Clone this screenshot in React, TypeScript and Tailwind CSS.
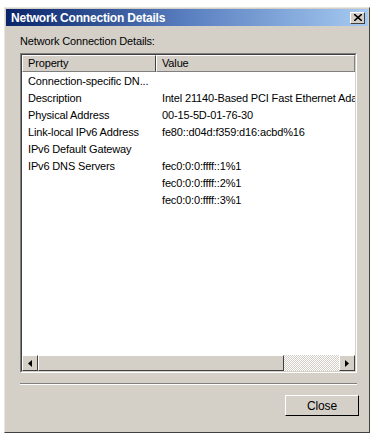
const rows: [string, string][] = [
  ["Connection-specific DN...", ""],
  ["Description", "Intel 21140-Based PCI Fast Ethernet Adapter (Emulated)"],
  ["Physical Address", "00-15-5D-01-76-30"],
  ["Link-local IPv6 Address", "fe80::d04d:f359:d16:acbd%16"],
  ["IPv6 Default Gateway", ""],
  ["IPv6 DNS Servers", "fec0:0:0:ffff::1%1"],
  ["", "fec0:0:0:ffff::2%1"],
  ["", "fec0:0:0:ffff::3%1"],
];

export default function App() {
  return (
    <div
      className="w-[378px] h-[441px] bg-white pt-[7px] pl-[4px] text-[11px] tracking-[-0.15px] text-black"
      style={{ fontFamily: '"Liberation Sans", Arial, sans-serif' }}
    >
      {/* window frame */}
      <div className="w-[366px] h-[426px] bg-[#d4d0c8] border border-t-[#e8e6e1] border-l-[#e8e6e1] border-r-[#404040] border-b-[#404040] flex flex-col">
        {/* title bar */}
        <div className="h-[17px] mx-[1px] mt-[1px] flex items-center justify-between pl-[5px] pr-[3px] bg-gradient-to-r from-[#0a246a] via-[#5a7fc0] to-[#a6caf0]">
          <span className="text-white font-bold text-[12px] tracking-[-0.2px]">Network Connection Details</span>
          <button className="w-[15px] h-[12px] bg-[#d4d0c8] border border-t-white border-l-white border-r-[#404040] border-b-[#404040] flex items-center justify-center">
            <svg width="8" height="7" viewBox="0 0 8 7">
              <path d="M0 0 L8 7 M8 0 L0 7" stroke="#000" strokeWidth="1.6" />
            </svg>
          </button>
        </div>

        <div className="flex flex-col pl-[15px] pr-[10px] flex-1">
          <div className="mt-[9px] h-[13px] leading-[13px]">Network Connection Details:</div>

          {/* list view */}
          <div className="mt-[5px] w-[337px] h-[320px] flex flex-col border border-t-[#808080] border-l-[#808080] border-r-white border-b-white">
            <div className="flex-1 flex flex-col bg-white border border-t-[#404040] border-l-[#404040] border-r-[#d4d0c8] border-b-[#d4d0c8] overflow-hidden">
              {/* header */}
              <div className="flex h-[17px] shrink-0">
                <div className="w-[134px] bg-[#d4d0c8] border border-t-white border-l-white border-r-[#404040] border-b-[#808080] pl-[5px] leading-[14px]">
                  Property
                </div>
                <div className="flex-1 bg-[#d4d0c8] border border-t-white border-l-white border-r-[#808080] border-b-[#808080] pl-[5px] leading-[14px]">
                  Value
                </div>
              </div>
              {/* rows */}
              <div className="flex-1 flex flex-col pt-[1px]">
                {rows.map(([p, v], i) => (
                  <div key={i} className="flex h-[17px] leading-[17px] whitespace-nowrap">
                    <div className="w-[134px] pl-[6px] overflow-hidden">{p}</div>
                    <div className="flex-1 pl-[6px] overflow-hidden">{v}</div>
                  </div>
                ))}
              </div>
              {/* horizontal scrollbar */}
              <div className="h-[16px] flex shrink-0">
                <div className="w-[16px] h-[16px] bg-[#d4d0c8] border border-t-white border-l-white border-r-[#404040] border-b-[#404040] flex items-center justify-center">
                  <svg width="4" height="7" viewBox="0 0 4 7">
                    <path d="M4 0 L0 3.5 L4 7 Z" fill="#000" />
                  </svg>
                </div>
                <div className="w-[246px] h-[16px] bg-[#d4d0c8] border border-t-white border-l-white border-r-[#404040] border-b-[#404040]" />
                <div className="flex-1 bg-[conic-gradient(#ffffff_25%,#d4d0c8_0_50%,#ffffff_0_75%,#d4d0c8_0)] bg-[length:2px_2px]" />
                <div className="w-[16px] h-[16px] bg-[#d4d0c8] border border-t-white border-l-white border-r-[#404040] border-b-[#404040] flex items-center justify-center">
                  <svg width="4" height="7" viewBox="0 0 4 7">
                    <path d="M0 0 L4 3.5 L0 7 Z" fill="#000" />
                  </svg>
                </div>
              </div>
            </div>
          </div>

          {/* separator */}
          <div className="mt-[10px] w-[337px] border-t border-t-[#808080] border-b border-b-white" />

          {/* buttons */}
          <div className="flex justify-end mt-[10px] w-[339px]">
            <button className="w-[74px] h-[21px] bg-[#d4d0c8] border border-t-white border-l-white border-r-black border-b-black flex items-center justify-center text-[12px]">
              Close
            </button>
          </div>
        </div>
      </div>
    </div>
  );
}
